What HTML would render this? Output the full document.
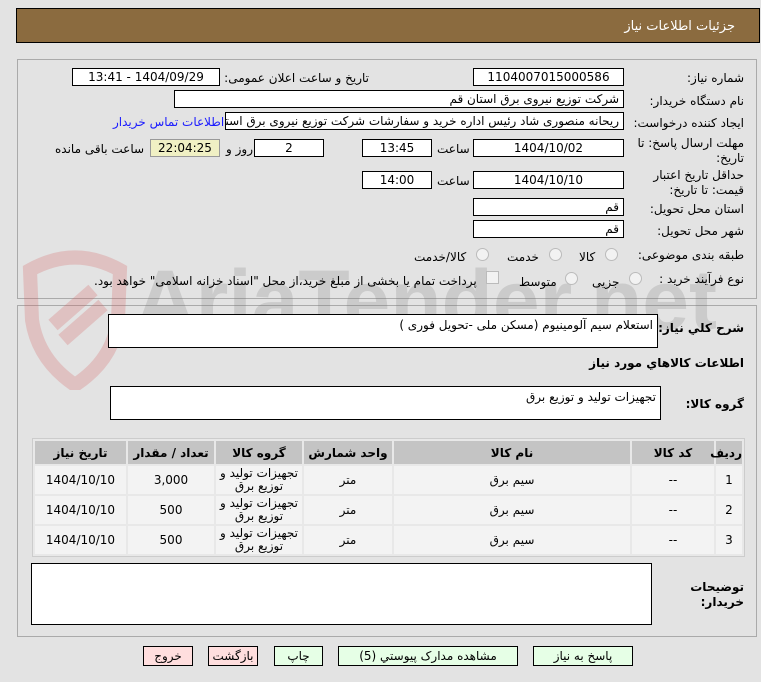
<!DOCTYPE html>
<html><head><meta charset="utf-8"><style>
body{margin:0;width:761px;height:682px;background:#e3e3e3;font-family:Tahoma,"DejaVu Sans","Liberation Sans",sans-serif;font-size:12px;color:#000;position:relative;overflow:hidden}
.a{position:absolute}
.box{position:absolute;background:#fff;border:1px solid #000;box-sizing:border-box;direction:rtl;padding:0 4px;line-height:16px;font-size:12px;white-space:nowrap;overflow:hidden}
.c{text-align:center}
.l{position:absolute;direction:rtl;white-space:nowrap;font-size:12px}
.rad{position:absolute;width:11px;height:11px;border:1px solid #bbb;border-radius:50%;background:#f2f2f2}
table{border-collapse:separate;border-spacing:2px;position:absolute;left:32px;top:438px;width:713px;background:#e8e8e8;border:1px solid #ccc;direction:rtl;table-layout:fixed}
td{background:#f3f3f3;text-align:center;font-size:12px;height:28px;padding:0}
th{background:#c4c4c4;height:23px;font-size:12px;padding:0}
.btn{position:absolute;top:646px;height:20px;border:1px solid #000;box-sizing:border-box;text-align:center;line-height:18px;font-size:12px;direction:rtl}
</style></head><body>
<div class="a" style="left:16px;top:8px;width:744px;height:35px;background:#8b6b3f;border:1px solid #000;box-sizing:border-box"></div>
<div class="l" style="right:26px;top:19px;color:#fff;font-size:13px">جزئیات اطلاعات نیاز</div>

<div class="a" style="left:17px;top:59px;width:740px;height:240px;border:1px solid #aaa;box-sizing:border-box"></div>
<div class="a" style="left:17px;top:305px;width:740px;height:332px;border:1px solid #aaa;box-sizing:border-box"></div>

<svg class="a" style="left:18px;top:250px" width="115" height="140" viewBox="0 0 115 140"><path d="M12 20 Q57 -5 102 20 L100 70 Q95 110 57 135 Q20 110 14 70 Z" fill="none" stroke="rgba(210,90,90,0.25)" stroke-width="14"/><path d="M35 75 L75 40 M45 90 L85 55" stroke="rgba(210,90,90,0.25)" stroke-width="14"/></svg>
<div class="a" style="left:135px;top:250px;color:rgba(120,120,120,0.22);font-size:84px;font-weight:bold;font-family:'Liberation Sans',sans-serif;line-height:100px">AriaTender.net</div>

<div class="l" style="right:17px;top:71px">شماره نیاز:</div>
<div class="box c" style="left:473px;top:68px;width:151px;height:18px">1104007015000586</div>
<div class="l" style="right:392px;top:71px">تاریخ و ساعت اعلان عمومی:</div>
<div class="box c" style="left:72px;top:68px;width:148px;height:18px">1404/09/29 - 13:41</div>

<div class="l" style="right:17px;top:94px">نام دستگاه خریدار:</div>
<div class="box" style="left:174px;top:90px;width:450px;height:18px">شرکت توزیع نیروی برق استان قم</div>

<div class="l" style="right:17px;top:116px">ایجاد کننده درخواست:</div>
<div class="box" style="left:225px;top:112px;width:399px;height:18px">ریحانه منصوری شاد رئیس اداره خرید و سفارشات شرکت توزیع نیروی برق استان قم</div>
<div class="l" style="left:113px;top:115px;color:#1a1aff">اطلاعات تماس خریدار</div>

<div class="l" style="right:17px;top:136px;line-height:15px;text-align:right">مهلت ارسال پاسخ: تا<br>تاریخ:</div>
<div class="box c" style="left:473px;top:139px;width:151px;height:18px">1404/10/02</div>
<div class="l" style="left:437px;top:142px">ساعت</div>
<div class="box c" style="left:362px;top:139px;width:70px;height:18px">13:45</div>
<div class="box c" style="left:254px;top:139px;width:70px;height:18px">2</div>
<div class="l" style="left:226px;top:142px">روز و</div>
<div class="box c" style="left:150px;top:139px;width:70px;height:18px;background:#f0f0c4;border-color:#999">22:04:25</div>
<div class="l" style="left:55px;top:142px">ساعت باقی مانده</div>

<div class="l" style="right:17px;top:168px;line-height:15px;text-align:right">حداقل تاریخ اعتبار<br>قیمت: تا تاریخ:</div>
<div class="box c" style="left:473px;top:171px;width:151px;height:18px">1404/10/10</div>
<div class="l" style="left:437px;top:174px">ساعت</div>
<div class="box c" style="left:362px;top:171px;width:70px;height:18px">14:00</div>

<div class="l" style="right:17px;top:202px">استان محل تحویل:</div>
<div class="box" style="left:473px;top:198px;width:151px;height:18px">قم</div>
<div class="l" style="right:17px;top:224px">شهر محل تحویل:</div>
<div class="box" style="left:473px;top:220px;width:151px;height:18px">قم</div>

<div class="l" style="right:17px;top:248px">طبقه بندی موضوعی:</div>
<div class="rad" style="left:605px;top:248px"></div><div class="l" style="left:579px;top:250px">کالا</div>
<div class="rad" style="left:549px;top:248px"></div><div class="l" style="left:507px;top:250px">خدمت</div>
<div class="rad" style="left:476px;top:248px"></div><div class="l" style="left:414px;top:250px">کالا/خدمت</div>

<div class="l" style="right:17px;top:272px">نوع فرآیند خرید :</div>
<div class="rad" style="left:629px;top:272px"></div><div class="l" style="left:592px;top:275px">جزیی</div>
<div class="rad" style="left:565px;top:272px"></div><div class="l" style="left:519px;top:275px">متوسط</div>
<div class="a" style="left:486px;top:271px;width:11px;height:11px;border:1px solid #bbb;background:#f2f2f2"></div>
<div class="l" style="left:94px;top:274px">پرداخت تمام یا بخشی از مبلغ خرید،از محل "اسناد خزانه اسلامی" خواهد بود.</div>

<div class="l" style="right:17px;top:321px;font-weight:bold">شرح کلي نياز:</div>
<div class="box" style="left:108px;top:314px;width:550px;height:34px;padding-top:2px">استعلام سیم آلومینیوم  (مسکن ملی -تحویل فوری )</div>
<div class="l" style="right:17px;top:356px;font-weight:bold">اطلاعات کالاهاي مورد نياز</div>
<div class="l" style="right:17px;top:397px;font-weight:bold">گروه کالا:</div>
<div class="box" style="left:110px;top:386px;width:551px;height:34px;padding-top:2px">تجهیزات تولید و توزیع برق</div>

<table>
<colgroup><col style="width:26px"><col style="width:82px"><col style="width:236px"><col style="width:88px"><col style="width:86px"><col style="width:86px"><col></colgroup>
<tr><th>ردیف</th><th>کد کالا</th><th>نام کالا</th><th>واحد شمارش</th><th>گروه کالا</th><th>تعداد / مقدار</th><th>تاریخ نیاز</th></tr>
<tr><td>1</td><td>--</td><td>سیم برق</td><td>متر</td><td style="line-height:13px">تجهیزات تولید و<br>توزیع برق</td><td>3,000</td><td>1404/10/10</td></tr>
<tr><td>2</td><td>--</td><td>سیم برق</td><td>متر</td><td style="line-height:13px">تجهیزات تولید و<br>توزیع برق</td><td>500</td><td>1404/10/10</td></tr>
<tr><td>3</td><td>--</td><td>سیم برق</td><td>متر</td><td style="line-height:13px">تجهیزات تولید و<br>توزیع برق</td><td>500</td><td>1404/10/10</td></tr>
</table>

<div class="l" style="right:17px;top:580px;font-weight:bold;line-height:15px;text-align:right">توضیحات<br>خریدار:</div>
<div class="box" style="left:31px;top:563px;width:621px;height:62px"></div>

<div class="btn" style="left:533px;width:100px;background:#e6ffe6">پاسخ به نیاز</div>
<div class="btn" style="left:338px;width:180px;background:#e6ffe6">مشاهده مدارک پیوستي (5)</div>
<div class="btn" style="left:274px;width:49px;background:#e6ffe6">چاپ</div>
<div class="btn" style="left:208px;width:50px;background:#ffdede">بازگشت</div>
<div class="btn" style="left:143px;width:50px;background:#ffdede">خروج</div>
</body></html>
